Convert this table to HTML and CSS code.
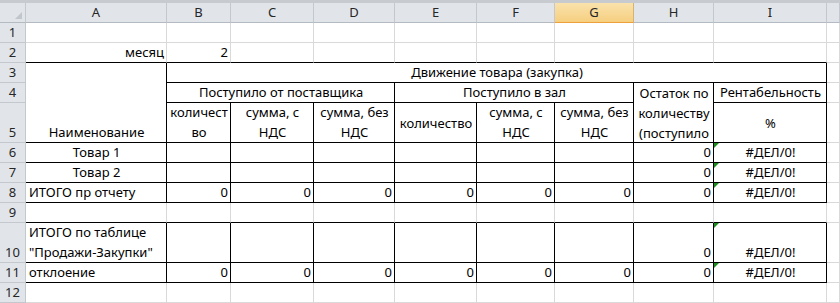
FILE: index.html
```html
<!DOCTYPE html>
<html lang="ru">
<head>
<meta charset="utf-8">
<title>Движение товара</title>
<link rel="stylesheet" href="styles.css">
</head>
<body>
<div class="sheet">
  <div class="strip"></div>

  <!-- column headers -->
  <div class="corner"></div>
  <div class="hd">A</div>
  <div class="hd">B</div>
  <div class="hd">C</div>
  <div class="hd">D</div>
  <div class="hd">E</div>
  <div class="hd">F</div>
  <div class="hd sel">G</div>
  <div class="hd">H</div>
  <div class="hd">I</div>
  <div class="hd"></div>

  <!-- row 1 -->
  <div class="rh">1</div>
  <div class="c"></div><div class="c"></div><div class="c"></div><div class="c"></div><div class="c"></div>
  <div class="c"></div><div class="c"></div><div class="c"></div><div class="c"></div><div class="c"></div>

  <!-- row 2 -->
  <div class="rh">2</div>
  <div class="c xb r">месяц</div>
  <div class="c xb r">2</div>
  <div class="c xb"></div><div class="c xb"></div><div class="c xb"></div><div class="c xb"></div>
  <div class="c xb"></div><div class="c xb"></div><div class="c xb"></div>
  <div class="c"></div>

  <!-- row 3 -->
  <div class="rh">3</div>
  <div class="c xr xb ctr span-a">Наименование</div>
  <div class="c xr xb ctr span-b-i">Движение товара (закупка)</div>
  <div class="c"></div>

  <!-- row 4 -->
  <div class="rh">4</div>
  <div class="c xr xb ctr span3">Поступило от поставщика</div>
  <div class="c xr xb ctr span3">Поступило в зал</div>
  <div class="c xr xb ctr top span-h">Остаток по<br>количеству<br>(поступило</div>
  <div class="c xr xb ctr">Рентабельность</div>
  <div class="c"></div>

  <!-- row 5 -->
  <div class="rh">5</div>
  <div class="c xr xb ctr">количест<br>во</div>
  <div class="c xr xb ctr">сумма, с<br>НДС</div>
  <div class="c xr xb ctr">сумма, без<br>НДС</div>
  <div class="c xr xb ctr mid">количество</div>
  <div class="c xr xb ctr">сумма, с<br>НДС</div>
  <div class="c xr xb ctr">сумма, без<br>НДС</div>
  <div class="c xr xb ctr mid">%</div>
  <div class="c"></div>

  <!-- row 6 -->
  <div class="rh">6</div>
  <div class="c xr xb ctr">Товар 1</div>
  <div class="c xr xb"></div><div class="c xr xb"></div><div class="c xr xb"></div>
  <div class="c xr xb"></div><div class="c xr xb"></div><div class="c xr xb"></div>
  <div class="c xr xb r">0</div>
  <div class="c xr xb ctr err">#ДЕЛ/0!</div>
  <div class="c"></div>

  <!-- row 7 -->
  <div class="rh">7</div>
  <div class="c xr xb ctr">Товар 2</div>
  <div class="c xr xb"></div><div class="c xr xb"></div><div class="c xr xb"></div>
  <div class="c xr xb"></div><div class="c xr xb"></div><div class="c xr xb"></div>
  <div class="c xr xb r">0</div>
  <div class="c xr xb ctr err">#ДЕЛ/0!</div>
  <div class="c"></div>

  <!-- row 8 -->
  <div class="rh">8</div>
  <div class="c xr xb">ИТОГО пр отчету</div>
  <div class="c xr xb r">0</div>
  <div class="c xr xb r">0</div>
  <div class="c xr xb r">0</div>
  <div class="c xr xb r">0</div>
  <div class="c xr xb r">0</div>
  <div class="c xr xb r">0</div>
  <div class="c xr xb r">0</div>
  <div class="c xr xb ctr err">#ДЕЛ/0!</div>
  <div class="c"></div>

  <!-- row 9 -->
  <div class="rh">9</div>
  <div class="c xb"></div><div class="c xb"></div><div class="c xb"></div><div class="c xb"></div><div class="c xb"></div>
  <div class="c xb"></div><div class="c xb"></div><div class="c xb"></div><div class="c xb"></div>
  <div class="c"></div>

  <!-- row 10 -->
  <div class="rh">10</div>
  <div class="c xr xb">ИТОГО по таблице<br>"Продажи-Закупки"</div>
  <div class="c xr xb"></div><div class="c xr xb"></div><div class="c xr xb"></div>
  <div class="c xr xb"></div><div class="c xr xb"></div><div class="c xr xb"></div>
  <div class="c xr xb r">0</div>
  <div class="c xr xb ctr err">#ДЕЛ/0!</div>
  <div class="c"></div>

  <!-- row 11 -->
  <div class="rh">11</div>
  <div class="c xr xb">отклоение</div>
  <div class="c xr xb r">0</div>
  <div class="c xr xb r">0</div>
  <div class="c xr xb r">0</div>
  <div class="c xr xb r">0</div>
  <div class="c xr xb r">0</div>
  <div class="c xr xb r">0</div>
  <div class="c xr xb r">0</div>
  <div class="c xr xb ctr err">#ДЕЛ/0!</div>
  <div class="c"></div>

  <!-- row 12 -->
  <div class="rh">12</div>
  <div class="c"></div><div class="c"></div><div class="c"></div><div class="c"></div><div class="c"></div>
  <div class="c"></div><div class="c"></div><div class="c"></div><div class="c"></div><div class="c"></div>
</div>
</body>
</html>
```
FILE: styles.css
```css
* {
  box-sizing: border-box;
}

html,
body {
  margin: 0;
  padding: 0;
  background: #ffffff;
}

body {
  font-family: "Noto Sans", "Open Sans", "DejaVu Sans", sans-serif;
  font-size: 13px;
  color: #000000;
  overflow: hidden;
}

/* worksheet grid: row header + columns A..I + the start of J */
.sheet {
  display: grid;
  grid-template-columns: 26px 141px 64px 83px 81px 82px 78px 79px 80px 113px 1fr;
  grid-template-rows: 3px 20px 20px 20px 20px 20px 40px 20px 20px 20px 20px 40px 20px 20px;
  width: 840px;
  height: 303px;
}

.strip {
  grid-column: 1 / -1;
  background: #c7cbd0;
}

/* headers */
.corner,
.hd,
.rh {
  background: #e1e5ea;
  border-right: 1px solid #c3c8ce;
  border-bottom: 1px solid #c3c8ce;
  color: #262626;
  line-height: 19px;
}

.corner {
  position: relative;
  border-bottom-color: #b4bac1;
}

.corner::after {
  content: "";
  position: absolute;
  right: 3px;
  bottom: 3px;
  border-left: 7px solid transparent;
  border-bottom: 7px solid #c1c6cc;
}

.hd {
  text-align: center;
  border-bottom-color: #b4bac1;
}

.hd.sel {
  background: linear-gradient(#f9e2ac, #f6cf80);
  border-bottom: 1px solid #eea03a;
  border-right-color: #d7b271;
}

.rh {
  display: flex;
  align-items: flex-end;
  justify-content: center;
  line-height: 20px;
  padding-bottom: 0;
}

/* cells */
.c {
  position: relative;
  display: flex;
  flex-direction: column;
  justify-content: flex-end;
  padding: 0 2px 0 3px;
  border-right: 1px solid #d9d9d9;
  border-bottom: 1px solid #d9d9d9;
  line-height: 20px;
  white-space: nowrap;
  overflow: hidden;
}

.c.xr {
  border-right-color: #000000;
}

.c.xb {
  border-bottom-color: #000000;
}

.c.r {
  text-align: right;
}

.c.ctr {
  text-align: center;
}

.c.mid {
  justify-content: center;
}

.c.top {
  justify-content: flex-start;
}

/* merged ranges */
.span-a {
  grid-row: span 3;
}

.span-b-i {
  grid-column: span 8;
}

.span3 {
  grid-column: span 3;
}

.span-h {
  grid-row: span 2;
}

/* formula error marker in the top-left corner */
.c.err::before {
  content: "";
  position: absolute;
  top: 0;
  left: 0;
  border-top: 5px solid #1e8c1e;
  border-right: 5px solid transparent;
}
```
